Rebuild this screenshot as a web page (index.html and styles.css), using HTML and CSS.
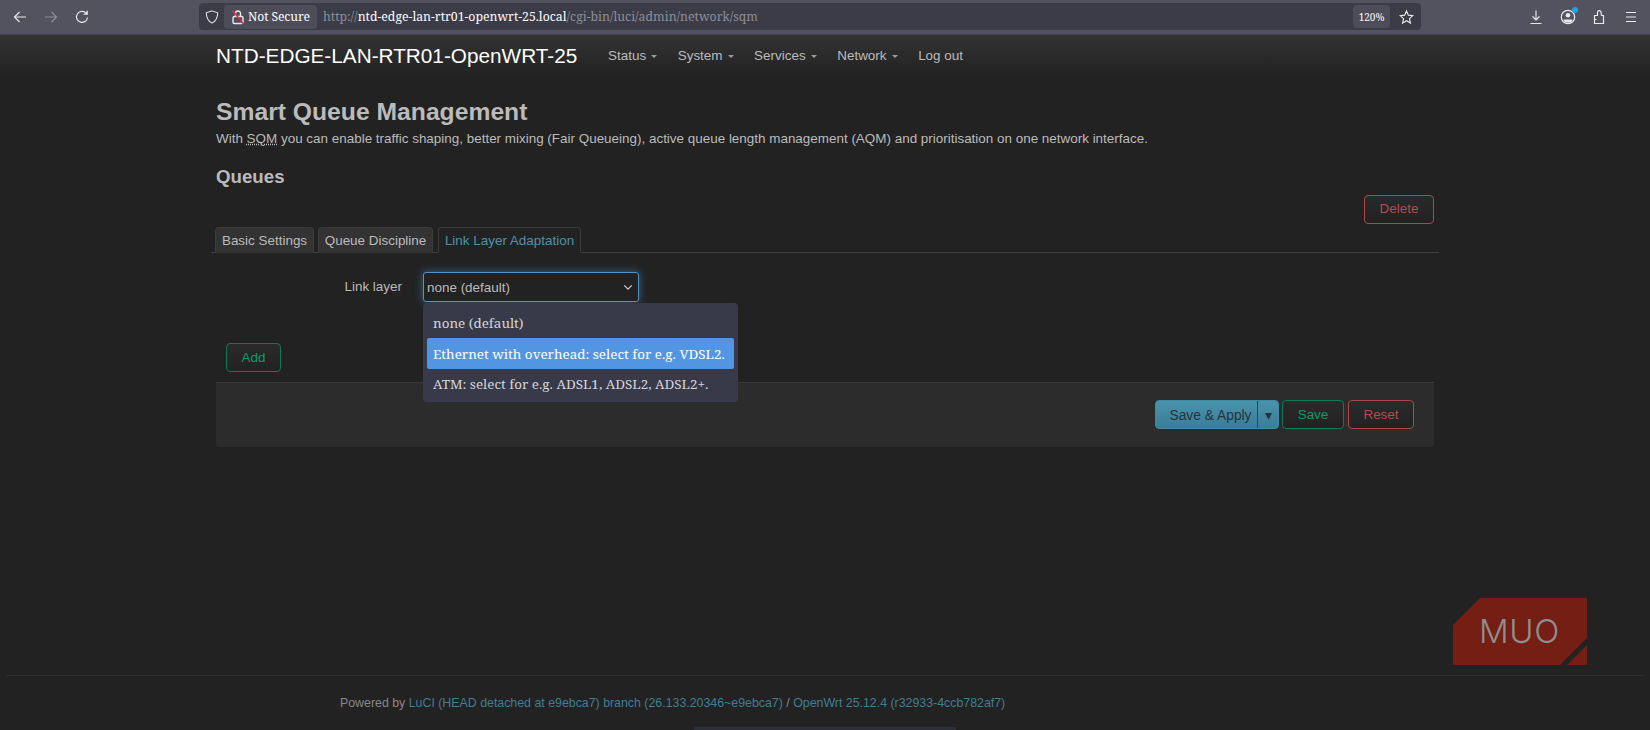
FILE: index.html
```html
<!DOCTYPE html>
<html lang="en">
<head>
<meta charset="utf-8">
<title>Smart Queue Management</title>
<link rel="stylesheet" href="styles.css">
</head>
<body>
<div class="toolbar">
  <div class="nav-btns">
    <svg class="ico" viewBox="0 0 16 16"><path d="M14 8H2.500M7.500 3 2.500 8l5 5"/></svg>
    <svg class="ico dim" viewBox="0 0 16 16"><path d="M2 8h11.500M8.500 3l5 5-5 5"/></svg>
    <svg class="ico" viewBox="0 0 16 16"><path d="M13.500 8.500A5.500 5.500 0 1 1 11.500 3.600"/><path class="solid" d="M13.800 1.200v4.600H9.200z"/></svg>
  </div>
  <div class="urlbar">
    <svg class="ico shield" viewBox="0 0 16 16"><path d="M8 1 14.500 3.200c0 5.300-1.500 9.300-6.500 11.800-5-2.500-6.500-6.500-6.500-11.800z"/></svg>
    <div class="secure">
      <svg class="ico lock" viewBox="0 0 16 16"><rect x="3" y="7.500" width="10" height="7" rx="1.500"/><path d="M5.500 7.500V4.500a2.500 2.500 0 0 1 5 0v3"/><path class="slash" d="M2.500 1.500 13.500 15"/></svg>
      <span>Not Secure</span>
    </div>
    <div class="url"><span class="scheme">http://</span><span class="host">ntd-edge-lan-rtr01-openwrt-25.local</span><span class="scheme">/cgi-bin/luci/admin/network/sqm</span></div>
    <div class="zoom-level">120%</div>
    <svg class="ico star" viewBox="0 0 16 16"><path d="M8 1.500 10 6l4.800.500-3.600 3.200 1 4.800L8 12l-4.200 2.500 1-4.800L1.200 6.500 6 6z"/></svg>
  </div>
  <div class="tool-icons">
    <svg class="ico" viewBox="0 0 16 16"><path d="M8 1.500V10.500M4.500 7.500 8 11l3.500-3.500M2.500 14.500h11"/></svg>
    <div class="profile">
      <svg class="ico" viewBox="0 0 16 16"><circle cx="8" cy="8" r="6.700"/><circle class="solid" cx="8" cy="6.300" r="2.300"/><path class="solid" d="M3.800 10.500h8.400v1.500l-2 1.500h-4.400l-2-1.500z"/></svg>
      <span class="dot"></span>
    </div>
    <svg class="ico" viewBox="0 0 16 16"><path d="M3.500 14.500V6.500H6.500V3.500a1.800 1.800 0 0 1 3.600 0L10.500 6.500H12.500v8zM3.500 10.500h2"/></svg>
    <svg class="ico" viewBox="0 0 16 16"><path d="M3 3.500h10M3 8h10M3 12.500h10"/></svg>
  </div>
</div>

<header class="topbar">
  <div class="container topbar-inner">
    <a class="brand">NTD-EDGE-LAN-RTR01-OpenWRT-25</a>
    <nav class="menu">
      <a class="drop">Status</a>
      <a class="drop">System</a>
      <a class="drop">Services</a>
      <a class="drop">Network</a>
      <a>Log out</a>
    </nav>
  </div>
</header>

<main class="container">
  <h2 class="title">Smart Queue Management</h2>
  <p class="desc">With <abbr>SQM</abbr> you can enable traffic shaping, better mixing (Fair Queueing), active queue length management (AQM) and prioritisation on one network interface.</p>
  <h3 class="section">Queues</h3>
  <div class="row-end"><button class="btn negative">Delete</button></div>
  <ul class="tabs">
    <li class="tab">Basic Settings</li>
    <li class="tab">Queue Discipline</li>
    <li class="tab active">Link Layer Adaptation</li>
  </ul>
  <div class="field">
    <label class="field-label">Link layer</label>
    <div class="select-wrap">
      <div class="select">
        <span>none (default)</span>
        <svg class="chev" viewBox="0 0 12 8"><path d="M1.500 1.500 6 6l4.500-4.500"/></svg>
      </div>
      <ul class="popup">
        <li>none (default)</li>
        <li class="hl">Ethernet with overhead: select for e.g. VDSL2.</li>
        <li>ATM: select for e.g. ADSL1, ADSL2, ADSL2+.</li>
      </ul>
    </div>
  </div>
  <div class="add-row"><button class="btn positive">Add</button></div>
  <div class="actions">
    <div class="split">
      <span class="split-main">Save &amp; Apply</span>
      <span class="split-arrow">▾</span>
    </div>
    <button class="btn positive save">Save</button>
    <button class="btn negative reset">Reset</button>
  </div>
</main>

<footer class="foot">
  <p class="foot-text">Powered by <a>LuCI (HEAD detached at e9ebca7) branch (26.133.20346~e9ebca7)</a> / <a>OpenWrt 25.12.4 (r32933-4ccb782af7)</a></p>
</footer>

<div class="watermark">
  <svg class="wm-shape" viewBox="0 0 134 67"><path d="M27 0H134V40L107 67H0V27z"/><path d="M134 47V67H114z"/></svg>
  <span class="wm-text">MUO</span>
</div>
<div class="stub"></div>
</body>
</html>
```
FILE: styles.css
```css
* { box-sizing: border-box; }
html, body { margin: 0; height: 730px; overflow: hidden; }
body { background: #222; color: #bbb; font-family: "Liberation Sans", Arial, sans-serif; font-size: 13.440px; position: relative; }
ul { list-style: none; margin: 0; padding: 0; }

/* browser chrome */
.toolbar { height: 35px; background: #52535f; border-bottom: 1px solid #42434d; display: flex; align-items: center; color: #fbfbfe; font-family: "Noto Serif", "DejaVu Serif", serif; }
.ico { width: 16px; height: 16px; fill: none; stroke: #e8e8ec; stroke-width: 1.200; flex: none; display: block; }
.ico .solid { fill: #e8e8ec; stroke: none; }
.ico.dim { opacity: .4; }
.nav-btns { display: flex; gap: 15px; padding-left: 12px; width: 199px; margin-top: -1px; }
.urlbar { width: 1222px; height: 27px; margin-top: -1px; background: #3b3c47; border-radius: 4px; display: flex; align-items: center; padding: 0 5px 0 6px; }
.shield { margin-right: 5px; width: 14px; }
.secure { width: 93px; height: 24px; background: #4c4d59; border-radius: 4px; display: flex; align-items: center; padding-left: 6px; gap: 2px; font-size: 12.200px; letter-spacing: -.1px; }
.lock { stroke-width: 1.400; }
.lock .slash { stroke: #e22850; }
.url { flex: 1; font-size: 12.300px; padding-left: 6px; white-space: nowrap; }
.scheme { color: #8d8e98; }
.host { color: #fbfbfe; }
.zoom-level { width: 37px; height: 23px; background: #4c4d59; border-radius: 4px; font-size: 10px; display: flex; align-items: center; justify-content: center; margin-right: 9px; }
.star { margin-right: 2px; width: 15px; }
.tool-icons { display: flex; gap: 15.600px; margin-left: 107px; margin-top: -1px; }
.profile { position: relative; }
.dot { position: absolute; top: -2px; right: -2px; width: 6px; height: 6px; border-radius: 50%; background: #1fa2e8; }

/* header */
.container { width: 1218px; margin: 0 auto; }
.topbar { height: 41px; background: linear-gradient(#333, #222); }
.topbar-inner { display: flex; align-items: center; height: 41px; }
.brand { color: #fff; font-size: 20.750px; width: 392px; }
.menu { display: flex; gap: 20.600px; }
.menu a { color: #bbb; font-size: 13.440px; }
.drop::after { content: ""; display: inline-block; margin-left: 5px; vertical-align: middle; border: 3.500px solid transparent; border-top-color: #999; border-bottom: 0; }

/* content */
.title { margin: 21px 0 0; font-size: 24.700px; line-height: 30px; font-weight: bold; color: #bbb; }
.desc { margin: 2px 0 0; line-height: 20px; font-size: 13.440px; }
abbr { text-decoration: underline dotted; }
.section { margin: 16px 0 0; font-size: 18.700px; line-height: 24px; font-weight: bold; color: #bbb; }
.row-end { display: flex; justify-content: flex-end; margin-top: 6px; height: 29px; }
.btn { height: 29px; padding: 0 0 2px; border-radius: 4px; background: linear-gradient(#2a2a2a, #222); font: 13.440px "Liberation Sans", Arial, sans-serif; }
.negative { border: 1px solid #a9474b; color: #b14e50; width: 70px; }
.positive { border: 1px solid #0c7a58; color: #0d9a6a; width: 55px; padding: 0; }

.tabs { display: flex; margin: 3px -5px 0; padding-left: 4px; gap: 4px; border-bottom: 1px solid #3f3f3f; height: 26px; }
.tab { height: 26px; width: 99px; background: #333; border: 1px solid #3b3b3b; border-bottom: 0; border-radius: 4px 4px 0 0; display: flex; align-items: center; justify-content: center; color: #bbb; }
.tab:nth-child(2) { width: 115px; }
.tab.active { width: 143px; margin-left: 1px; background: #222; color: #4b93ad; border-bottom: 1px solid #222; height: 26px; }

.field { display: flex; margin-top: 19px; }
.field-label { width: 186px; text-align: right; line-height: 30px; }
.select-wrap { position: relative; margin-left: 21px; }
.select { width: 216px; height: 30px; background: #222; border: 1px solid #4b93c9; border-radius: 3px; box-shadow: 0 0 8px rgba(82,168,236,.5); display: flex; align-items: center; justify-content: space-between; padding: 0 5px 0 3px; }
.chev { width: 10px; height: 7px; fill: none; stroke: #ccc; stroke-width: 1.500; }
.popup { position: absolute; top: 31px; left: 0; width: 315px; height: 99px; background: #383a4a; border-radius: 4px; padding: 3px 4px; font-family: "Noto Serif", "DejaVu Serif", serif; font-size: 13.440px; color: #d5d5da; white-space: nowrap; z-index: 2; }
.popup li { height: 31.500px; line-height: 31.500px; padding-left: 6px; border-radius: 2px; }
.popup li:first-child { line-height: 35px; }
.popup .hl { background: #5295e2; color: #fff; line-height: 33px; }

.add-row { margin: 41px 0 0 10px; }
.actions { margin-top: 10px; height: 65px; background: #2c2c2c; border-top: 1px solid #3a3a3a; border-radius: 0 0 3px 3px; display: flex; justify-content: flex-end; align-items: center; padding: 0 20px 2px 0; }
.split { height: 29px; width: 124px; border-radius: 4px; background: linear-gradient(#4a93ad, #3a7d97); border: 1px solid #3f8aa6; display: flex; color: #26323b; font-size: 13.800px; }
.split-main { width: 102px; text-align: center; line-height: 29px; padding-left: 8px; border-right: 1px solid #1d4b5e; }
.split-arrow { flex: 1; text-align: center; line-height: 29px; }
.save { margin-left: 3px; width: 62px; padding-top: 1px; }
.reset { margin-left: 4px; width: 66px; padding: 1px 0 0; }

/* footer */
.foot { margin: 228px 6px 0 6px; border-top: 1px solid #2f2f2f; height: 54px; }
.foot-text { margin: 18px 0 0 334px; font-size: 12.370px; line-height: 18px; color: #888; }
.foot-text a { color: #3f7f95; }

/* overlays */
.watermark { position: absolute; left: 1453px; top: 598px; width: 134px; height: 67px; }
.wm-shape { width: 134px; height: 67px; display: block; fill: #741e14; }
.wm-text { position: absolute; left: 26px; top: 13px; font: 300 33px/41px Inter, "Liberation Sans", sans-serif; color: #8f8f8f; letter-spacing: .6px; }
.stub { position: absolute; left: 694px; top: 727px; width: 262px; height: 3px; background: #2c2e3a; }
```
